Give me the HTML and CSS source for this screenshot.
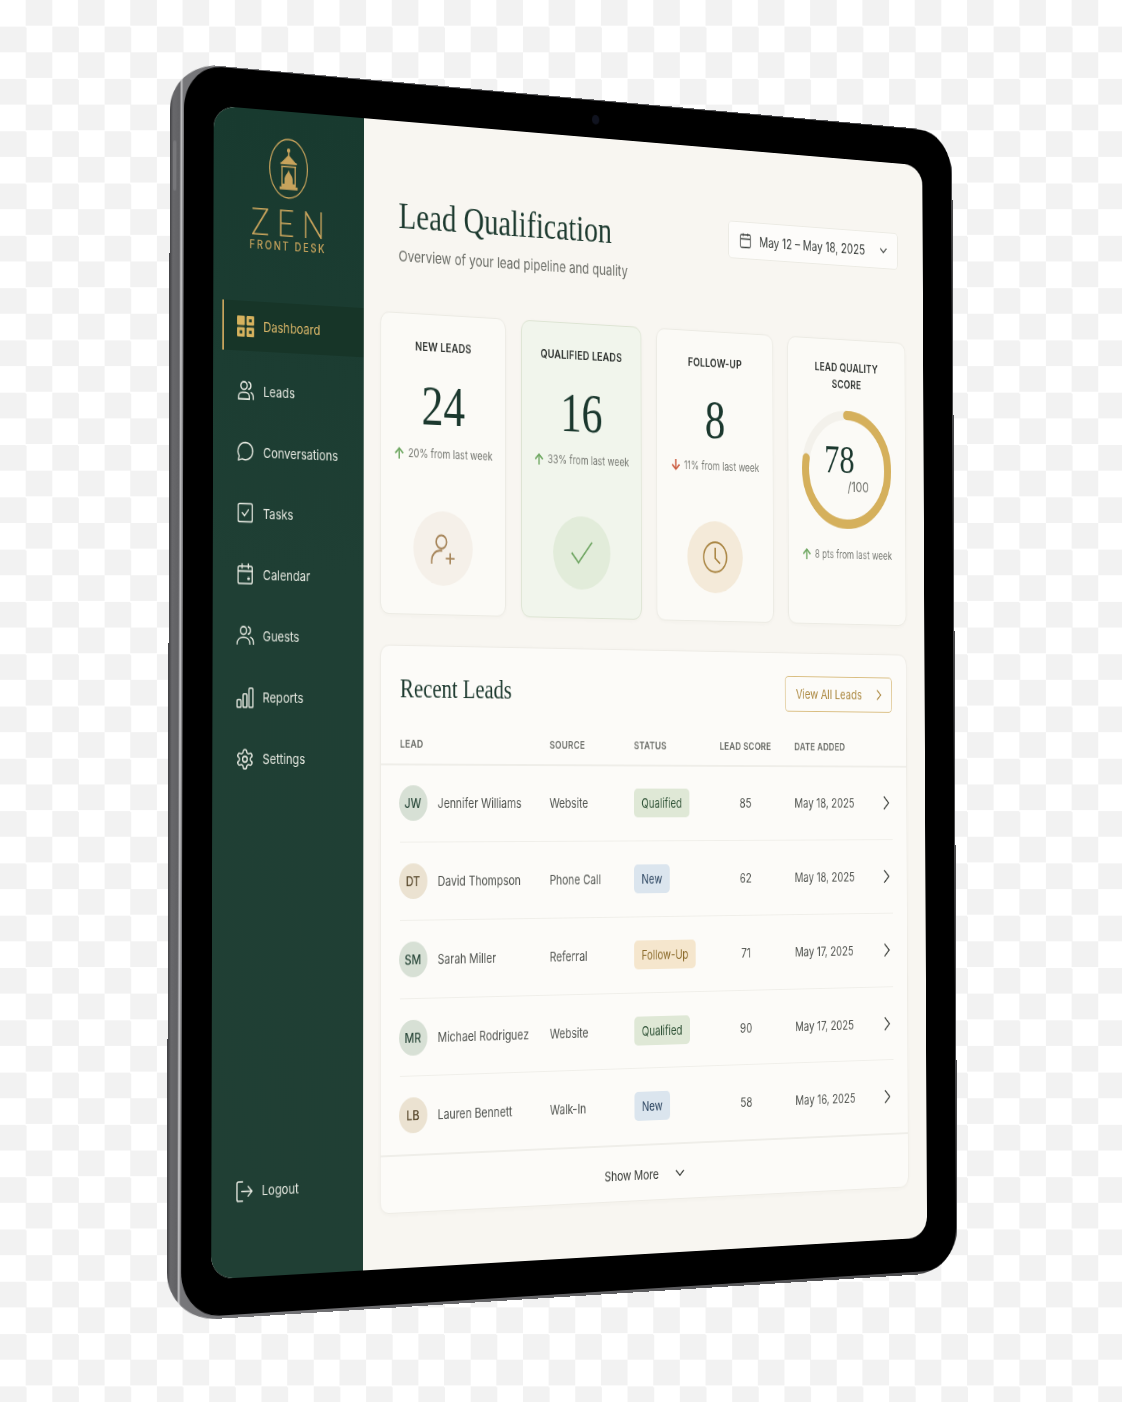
FILE: index.html
```html
<!doctype html>
<html lang="en">
  <head>
    <meta charset="UTF-8" />
    <title>Zen Front Desk - Lead Qualification</title>
    <link rel="stylesheet" href="styles.css">
  </head>
  <body>
    <div class="device">
      <span class="side-button"></span>
      <div class="bezel">
        <span class="camera"></span>
        <div class="screen">
          <aside class="sidebar">
            <div class="brand">
              <svg class="lantern" viewBox="0 0 48 60" fill="none" stroke="currentColor">
                <ellipse cx="24" cy="30" rx="23" ry="29" stroke-width="1.3" />
                <path d="M24 11v6" stroke-width="1.6" />
                <circle cx="24" cy="12" r="1.6" fill="currentColor" />
                <path d="M16 24l8-7 8 7z" fill="currentColor" stroke-width="1" />
                <path d="M14 25h20M15 28h18" stroke-width="1.6" />
                <path d="M16 28v20M32 28v20" stroke-width="1.4" />
                <path d="M24 31c1 4 5 6 5 10v4h3v3h3v3H13v-3h3v-3h3v-4c0-4 4-6 5-10z" fill="currentColor" stroke="none" />
              </svg>
              <div class="brand-name">ZEN</div>
              <div class="brand-sub">FRONT DESK</div>
            </div>

            <nav class="nav">
              <a class="nav-item active">
                <svg class="nav-icon" viewBox="0 0 22 22">
                  <rect x="1" y="1" width="9" height="9" rx="1" fill="#d6b25e" />
                  <rect x="12" y="1" width="9" height="9" rx="1" fill="#d6b25e" />
                  <rect x="1" y="12" width="9" height="9" rx="1" fill="#d6b25e" />
                  <rect x="12" y="12" width="9" height="9" rx="1" fill="#d6b25e" />
                  <rect x="15" y="4" width="3" height="3" fill="#1a3a2e" />
                  <rect x="4" y="15" width="3" height="3" fill="#1a3a2e" />
                  <rect x="15" y="15" width="3" height="3" fill="#1a3a2e" />
                </svg>
                Dashboard
              </a>
              <a class="nav-item">
                <svg class="nav-icon line" viewBox="0 0 24 24">
                  <circle cx="10" cy="7" r="4" />
                  <path d="M3 21v-2a5 5 0 0 1 5-5h4a5 5 0 0 1 5 5v2z" />
                  <path d="M16 3.2a4 4 0 0 1 0 7.6M19 14.2a5 5 0 0 1 3 4.6V21" />
                </svg>
                Leads
              </a>
              <a class="nav-item">
                <svg class="nav-icon line" viewBox="0 0 24 24">
                  <path d="M12 2.5a9.5 9 0 1 1-4 17.2L3 21l1.2-4.4A9.5 9 0 0 1 12 2.5z" />
                </svg>
                Conversations
              </a>
              <a class="nav-item">
                <svg class="nav-icon line" viewBox="0 0 24 24">
                  <rect x="3" y="2.5" width="18" height="19" rx="2" />
                  <path d="M8 12l3 3 5-6" />
                </svg>
                Tasks
              </a>
              <a class="nav-item">
                <svg class="nav-icon line" viewBox="0 0 24 24">
                  <rect x="3" y="4" width="18" height="18" rx="2" />
                  <path d="M3 9h18M8 1.5V6M16 1.5V6" />
                  <path d="M15.5 16h1.5v1.5h-1.5z" />
                </svg>
                Calendar
              </a>
              <a class="nav-item">
                <svg class="nav-icon line" viewBox="0 0 24 24">
                  <circle cx="10" cy="7" r="4" />
                  <path d="M2 21v-1a7 7 0 0 1 7-6h2a7 7 0 0 1 7 6v1" />
                  <path d="M16 3.2a4 4 0 0 1 0 7.6M19 14a6 6 0 0 1 3.5 5.5V21" />
                </svg>
                Guests
              </a>
              <a class="nav-item">
                <svg class="nav-icon line" viewBox="0 0 24 24">
                  <rect x="2" y="14" width="5" height="8" rx="1" />
                  <rect x="9.5" y="8" width="5" height="14" rx="1" />
                  <rect x="17" y="2" width="5" height="20" rx="1" />
                </svg>
                Reports
              </a>
              <a class="nav-item">
                <svg class="nav-icon line" viewBox="0 0 24 24">
                  <path d="M12.22 2h-.44a2 2 0 0 0-2 2v.18a2 2 0 0 1-1 1.73l-.43.25a2 2 0 0 1-2 0l-.15-.08a2 2 0 0 0-2.73.73l-.22.38a2 2 0 0 0 .73 2.73l.15.1a2 2 0 0 1 1 1.72v.51a2 2 0 0 1-1 1.74l-.15.09a2 2 0 0 0-.73 2.73l.22.38a2 2 0 0 0 2.73.73l.15-.08a2 2 0 0 1 2 0l.43.25a2 2 0 0 1 1 1.73V20a2 2 0 0 0 2 2h.44a2 2 0 0 0 2-2v-.18a2 2 0 0 1 1-1.73l.43-.25a2 2 0 0 1 2 0l.15.08a2 2 0 0 0 2.73-.73l.22-.39a2 2 0 0 0-.73-2.73l-.15-.08a2 2 0 0 1-1-1.74v-.5a2 2 0 0 1 1-1.74l.15-.09a2 2 0 0 0 .73-2.73l-.22-.38a2 2 0 0 0-2.73-.73l-.15.08a2 2 0 0 1-2 0l-.43-.25a2 2 0 0 1-1-1.73V4a2 2 0 0 0-2-2z" />
                  <circle cx="12" cy="12" r="3" />
                </svg>
                Settings
              </a>
              <a class="nav-item logout">
                <svg class="nav-icon line" viewBox="0 0 24 24">
                  <path d="M10 2H5a2 2 0 0 0-2 2v16a2 2 0 0 0 2 2h5" />
                  <path d="M9 12h13M17 7l5 5-5 5" />
                </svg>
                Logout
              </a>
            </nav>
          </aside>

          <main class="main">
            <header class="page-head">
              <div>
                <h1 class="page-title">Lead Qualification</h1>
                <p class="page-sub">Overview of your lead pipeline and quality</p>
              </div>
              <div class="date-box">
                <svg class="date-icon" viewBox="0 0 24 24">
                  <rect x="3" y="4" width="18" height="18" rx="2" />
                  <path d="M3 10h18M8 2v4M16 2v4" />
                </svg>
                <span>May 12 – May 18, 2025</span>
                <svg class="date-chev" viewBox="0 0 24 24"><path d="M6 9l6 6 6-6" /></svg>
              </div>
            </header>

            <section class="cards">
              <div class="card">
                <div class="card-label">NEW LEADS</div>
                <div class="card-num">24</div>
                <div class="card-change"><span class="up">↑</span>20% from last week</div>
                <div class="card-circle circle-sand">
                  <svg viewBox="0 0 32 32">
                    <circle cx="14" cy="10" r="6" />
                    <path d="M3 30v-3a9 9 0 0 1 9-9h3" />
                    <path d="M24 20v10M19 25h10" />
                  </svg>
                </div>
              </div>
              <div class="card card-green">
                <div class="card-label">QUALIFIED LEADS</div>
                <div class="card-num">16</div>
                <div class="card-change"><span class="up">↑</span>33% from last week</div>
                <div class="card-circle circle-green">
                  <svg viewBox="0 0 32 32"><path d="M4 16l8 9 16-19" /></svg>
                </div>
              </div>
              <div class="card">
                <div class="card-label">FOLLOW-UP</div>
                <div class="card-num">8</div>
                <div class="card-change"><span class="down">↓</span>11% from last week</div>
                <div class="card-circle circle-amber">
                  <svg viewBox="0 0 32 32">
                    <circle cx="16" cy="16" r="14" />
                    <path d="M16 7v10l6 5" />
                  </svg>
                </div>
              </div>
              <div class="card">
                <div class="card-label two-line">LEAD QUALITY<br>SCORE</div>
                <div class="gauge">
                  <svg viewBox="0 0 127 127">
                    <circle class="gauge-track" cx="63.5" cy="63.5" r="58.5" pathLength="100" />
                    <circle class="gauge-fill" cx="63.5" cy="63.5" r="58.5" pathLength="100" />
                  </svg>
                  <span class="gauge-num">78</span>
                  <span class="gauge-max">/100</span>
                </div>
                <div class="card-change gauge-change"><span class="up">↑</span>8 pts from last week</div>
              </div>
            </section>

            <section class="panel">
              <div class="panel-head">
                <h2 class="panel-title">Recent Leads</h2>
                <a class="view-all">
                  View All Leads
                  <svg viewBox="0 0 24 24"><path d="M8 4l8 8-8 8" /></svg>
                </a>
              </div>

              <div class="row row-head">
                <span>LEAD</span>
                <span>SOURCE</span>
                <span>STATUS</span>
                <span class="score">LEAD SCORE</span>
                <span class="date">DATE ADDED</span>
                <span></span>
              </div>

              <div class="row lead">
                <span class="person"><b class="avatar av-green">JW</b>Jennifer Williams</span>
                <span>Website</span>
                <span><i class="badge qualified">Qualified</i></span>
                <span class="score">85</span>
                <span class="date">May 18, 2025</span>
                <svg class="row-chev" viewBox="0 0 24 24"><path d="M8 4l8 8-8 8" /></svg>
              </div>
              <div class="row lead">
                <span class="person"><b class="avatar av-sand">DT</b>David Thompson</span>
                <span>Phone Call</span>
                <span><i class="badge new">New</i></span>
                <span class="score">62</span>
                <span class="date">May 18, 2025</span>
                <svg class="row-chev" viewBox="0 0 24 24"><path d="M8 4l8 8-8 8" /></svg>
              </div>
              <div class="row lead">
                <span class="person"><b class="avatar av-green">SM</b>Sarah Miller</span>
                <span>Referral</span>
                <span><i class="badge follow">Follow-Up</i></span>
                <span class="score">71</span>
                <span class="date">May 17, 2025</span>
                <svg class="row-chev" viewBox="0 0 24 24"><path d="M8 4l8 8-8 8" /></svg>
              </div>
              <div class="row lead">
                <span class="person"><b class="avatar av-green">MR</b>Michael Rodriguez</span>
                <span>Website</span>
                <span><i class="badge qualified">Qualified</i></span>
                <span class="score">90</span>
                <span class="date">May 17, 2025</span>
                <svg class="row-chev" viewBox="0 0 24 24"><path d="M8 4l8 8-8 8" /></svg>
              </div>
              <div class="row lead">
                <span class="person"><b class="avatar av-sand">LB</b>Lauren Bennett</span>
                <span>Walk-In</span>
                <span><i class="badge new">New</i></span>
                <span class="score">58</span>
                <span class="date">May 16, 2025</span>
                <svg class="row-chev" viewBox="0 0 24 24"><path d="M8 4l8 8-8 8" /></svg>
              </div>

              <div class="panel-foot">
                Show More
                <svg viewBox="0 0 24 24"><path d="M5 8l7 7 7-7" /></svg>
              </div>
            </section>
          </main>
        </div>
      </div>
    </div>
  </body>
</html>
```

FILE: styles.css
```css
html,
body {
  margin: 0;
  height: 1402px;
  overflow: hidden;
}

body {
  background: repeating-conic-gradient(#f2f2f2 0 25%, #ffffff 0 50%) 0 0 / 52.3px 52.3px;
  font-family: Inter, "Liberation Sans", sans-serif;
  color: #3c3f3b;
}

/* flat tablet, the matrix tilts it into the photographed corners */
.device {
  position: relative;
  display: flex;
  box-sizing: border-box;
  width: 1040px;
  height: 1240px;
  padding: 1px 2px 3px 17px;
  border-radius: 60px / 48px;
  background: linear-gradient(90deg, #3f3f42 0, #68686b 4px, #616164 12px, #d2d2d4 14px, #77777a 16px, #4a4a4c 100%);
  transform-origin: 0 0;
  transform: matrix3d(0.848168, 0.080786, 0, 0.00010088, -0.0041213, 1.004322, 0, -0.0000092363, 0, 0, 1, 0, 170, 61.5, 0, 1);
}

.side-button {
  position: absolute;
  left: 4px;
  top: 78px;
  width: 4px;
  height: 50px;
  border-radius: 2px;
  background: #77777a;
}

.bezel {
  position: relative;
  display: flex;
  flex: 1;
  padding: 39px 42px 36px 36px;
  border-radius: 46px / 44px;
  background: #000;
}

.camera {
  position: absolute;
  left: 518px;
  top: 15px;
  width: 10px;
  height: 10px;
  border-radius: 50%;
  background: #10131f;
}

.screen {
  display: flex;
  flex: 1;
  overflow: hidden;
  border-radius: 26px / 22px;
  background: #f8f6f1;
}

/* sidebar */
.sidebar {
  display: flex;
  flex-direction: column;
  flex: none;
  box-sizing: border-box;
  width: 186px;
  padding: 28px 0 60px 11px;
  background: linear-gradient(180deg, #183a2f, #1f3f34 40%, #203f34);
}

.brand {
  display: flex;
  flex-direction: column;
  align-items: center;
  padding-right: 14px;
  color: #c7a35c;
}

.lantern {
  width: 50px;
  height: 61px;
  margin-top: -1px;
}

.brand-name {
  margin: 3px -9px 0 0;
  font-family: Lato, sans-serif;
  font-size: 38px;
  font-weight: 300;
  line-height: 40px;
  letter-spacing: 9px;
}

.brand-sub {
  margin-top: -2px;
  font-size: 11.5px;
  font-weight: 500;
  line-height: 14px;
  letter-spacing: 2.2px;
}

.nav {
  display: flex;
  flex-direction: column;
  flex: 1;
  gap: 11.1px;
  margin-top: 50px;
}

.nav-item {
  display: flex;
  align-items: center;
  flex: none;
  gap: 10.5px;
  height: 50px;
  padding-left: 16.5px;
  font-size: 13.7px;
  color: #e4e7df;
}

.nav-item.active {
  margin-bottom: 3.5px;
  border-left: 2px solid #c7a35c;
  padding-left: 14.5px;
  background: #173528;
  color: #d8b568;
}

.nav-item.logout {
  margin-top: auto;
}

.nav-icon {
  flex: none;
  width: 23px;
  height: 23px;
}

.line {
  fill: none;
  stroke: #e4e7df;
  stroke-width: 1.6;
  stroke-linecap: round;
  stroke-linejoin: round;
}

/* main column */
.main {
  flex: 1;
  min-width: 0;
  padding: 75px 26.5px 0 21px;
}

.page-head {
  display: flex;
  justify-content: space-between;
  align-items: flex-start;
  padding: 0 9.5px 0 23px;
}

.page-title {
  margin: 0;
  font-family: "Liberation Serif", serif;
  font-size: 37px;
  font-weight: 400;
  line-height: 44px;
  color: #1d3a2f;
}

.page-sub {
  margin: 8.5px 0 0;
  font-size: 15.1px;
  line-height: 20px;
  color: #6d6f69;
}

.date-box {
  display: flex;
  align-items: center;
  box-sizing: border-box;
  width: 240px;
  height: 40px;
  margin-top: 1px;
  padding: 0 11px 0 14px;
  border: 1px solid #ecebe4;
  border-radius: 5px;
  background: #fdfcfa;
  font-size: 14px;
  color: #3f4340;
}

.date-icon,
.date-chev {
  flex: none;
  fill: none;
  stroke: #3f4340;
  stroke-width: 1.7;
}

.date-icon {
  width: 18px;
  height: 18px;
  margin-right: 10px;
}

.date-chev {
  width: 18px;
  height: 18px;
  margin-left: auto;
}

.cards {
  display: grid;
  grid-template-columns: 160.5px 160.5px 160.5px 1fr;
  gap: 20px;
  height: 307px;
  margin-top: 47.5px;
}

.card {
  display: flex;
  flex-direction: column;
  align-items: center;
  box-sizing: border-box;
  border: 1px solid #ecebe4;
  border-radius: 11px;
  background: #fbfaf6;
  box-shadow: 0 1px 4px rgba(70, 60, 30, 0.03);
}

.card-green {
  border-color: #dde4d3;
  background: #f1f5ec;
}

.card-label {
  margin-top: 25px;
  font-size: 12px;
  font-weight: 600;
  line-height: 16px;
  letter-spacing: 0.2px;
  color: #2e322f;
}

.two-line {
  margin-top: 21px;
  line-height: 17.5px;
  text-align: center;
}

.card-num {
  margin-top: 22px;
  font-family: "Liberation Serif", serif;
  font-size: 56px;
  line-height: 60px;
  color: #1b382e;
}

.card-change {
  display: flex;
  align-items: center;
  gap: 4px;
  margin-top: 11px;
  font-size: 11.5px;
  line-height: 16px;
  color: #777973;
}

.up,
.down {
  font-size: 16px;
  font-weight: 700;
  color: #6fa862;
}

.down {
  color: #c9573a;
}

.card-circle {
  display: flex;
  justify-content: center;
  align-items: center;
  width: 76px;
  height: 76px;
  margin-top: auto;
  margin-bottom: 29px;
  border-radius: 50%;
}

.card-circle svg {
  width: 36px;
  height: 36px;
  fill: none;
  stroke-width: 1.7;
}

.circle-sand {
  background: #f5f0e9;
}

.circle-sand svg {
  stroke: #a6855a;
}

.circle-green {
  background: #e2ecda;
}

.circle-green svg {
  stroke: #6fa562;
}

.circle-amber {
  background: #f4ead9;
}

.circle-amber svg {
  stroke: #a98542;
}

.gauge {
  position: relative;
  width: 127px;
  height: 127px;
  margin-top: 20px;
}

.gauge svg {
  display: block;
  fill: none;
  stroke-width: 10;
  transform: rotate(-90deg);
}

.gauge-track {
  stroke: #f3f1eb;
}

.gauge-fill {
  stroke: #d5b05c;
  stroke-linecap: round;
  stroke-dasharray: 78 100;
}

.gauge-num {
  position: absolute;
  left: 31.5px;
  top: 30px;
  font-family: "Liberation Serif", serif;
  font-size: 43px;
  line-height: 46px;
  color: #1b382e;
}

.gauge-max {
  position: absolute;
  left: 64.5px;
  top: 72px;
  font-size: 15px;
  line-height: 20px;
  color: #6d6f69;
}

.gauge-change {
  margin-top: 20px;
}

/* recent leads */
.panel {
  display: flex;
  flex-direction: column;
  box-sizing: border-box;
  height: 573px;
  margin-top: 31px;
  border: 1px solid #eeece6;
  border-radius: 11px;
  background: #fcfbf8;
  box-shadow: 0 1px 4px rgba(70, 60, 30, 0.03);
}

.panel-head {
  display: flex;
  justify-content: space-between;
  align-items: center;
  height: 38px;
  padding: 24px 20px 0 24px;
}

.panel-title {
  margin: 0;
  font-family: "Liberation Serif", serif;
  font-size: 26.5px;
  font-weight: 400;
  color: #1d3a2f;
}

.view-all {
  display: flex;
  justify-content: space-between;
  align-items: center;
  box-sizing: border-box;
  width: 152px;
  height: 38px;
  padding: 0 10px 0 15px;
  border: 1px solid #d9bd80;
  border-radius: 5px;
  font-size: 13.5px;
  color: #ad8a43;
}

.view-all svg {
  width: 16px;
  height: 16px;
  fill: none;
  stroke: #ad8a43;
  stroke-width: 2;
}

.row {
  display: grid;
  grid-template-columns: 193px 112px 115px 74px 1fr 19px;
  align-items: center;
  margin: 0 20px 0 24px;
  font-size: 13.4px;
  color: #50534f;
}

.row-head {
  margin: 0;
  padding: 27px 20px 9.6px 24px;
  border-bottom: 2px solid #efeee9;
  font-size: 11px;
  font-weight: 600;
  line-height: 20px;
  letter-spacing: 0.2px;
  color: #6e706b;
}

.lead {
  height: 77.7px;
  border-bottom: 1px solid #f0efea;
}

.lead:nth-last-child(2) {
  margin: 0;
  padding: 0 20px 0 24px;
  border-bottom: 2px solid #efeee9;
}

.score {
  text-align: center;
}

.date {
  padding-left: 31px;
}

.person {
  display: flex;
  align-items: center;
  gap: 13.5px;
}

.avatar {
  display: flex;
  justify-content: center;
  align-items: center;
  flex: none;
  width: 36px;
  height: 36px;
  margin-left: -1.5px;
  border-radius: 50%;
  font-size: 13.5px;
  font-weight: 500;
}

.av-green {
  background: #d7e0d5;
  color: #2c4a3c;
}

.av-sand {
  background: #ebe2d1;
  color: #5a4a2e;
}

.badge {
  display: inline-block;
  padding: 0 10px;
  border-radius: 5px;
  font-size: 13px;
  font-style: normal;
  line-height: 30px;
}

.qualified {
  background: #dfe8d6;
  color: #2f5236;
}

.new {
  background: #dbe5ee;
  color: #2c4560;
}

.follow {
  background: #f5e6cd;
  color: #8a6a2a;
}

.row-chev {
  width: 20px;
  height: 20px;
  fill: none;
  stroke: #3c3f3b;
  stroke-width: 1.8;
}

.panel-foot {
  display: flex;
  flex: 1;
  align-items: center;
  gap: 20px;
  padding: 3px 0 0 289px;
  font-size: 13.5px;
  color: #3c3f3b;
}

.panel-foot svg {
  width: 18px;
  height: 18px;
  fill: none;
  stroke: #3c3f3b;
  stroke-width: 2;
}
```
